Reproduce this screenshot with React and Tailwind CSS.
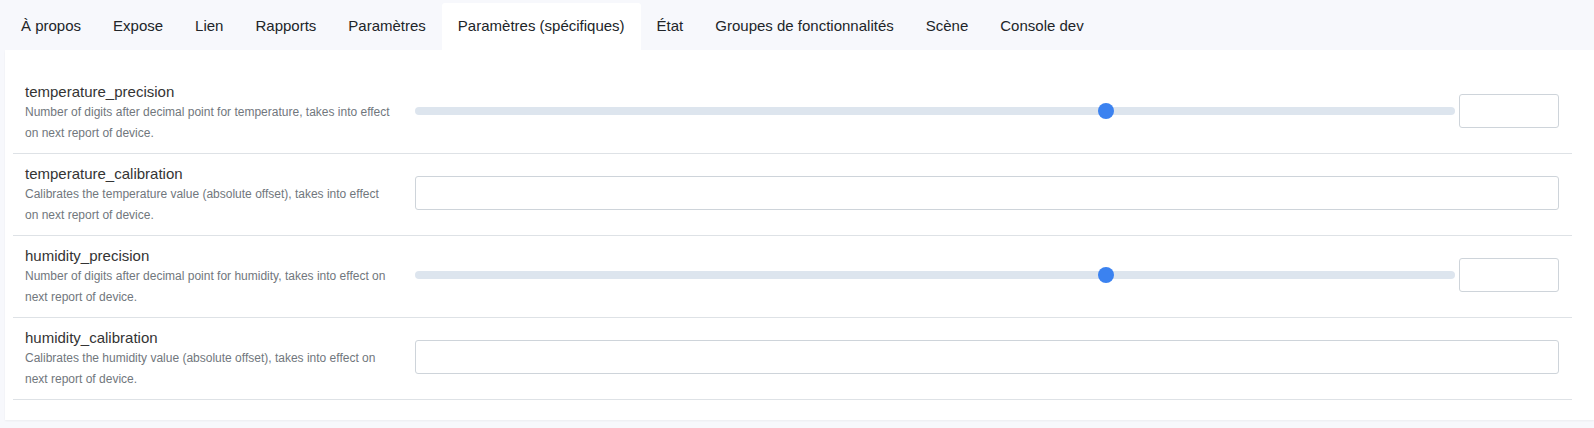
import React, { useState } from 'react';

const tabs = [
  'À propos',
  'Expose',
  'Lien',
  'Rapports',
  'Paramètres',
  'Paramètres (spécifiques)',
  'État',
  'Groupes de fonctionnalités',
  'Scène',
  'Console dev',
];

const settings = [
  {
    name: 'temperature_precision',
    description: 'Number of digits after decimal point for temperature, takes into effect on next report of device.',
    type: 'range',
    value: 2,
    max: 3,
  },
  {
    name: 'temperature_calibration',
    description: 'Calibrates the temperature value (absolute offset), takes into effect on next report of device.',
    type: 'number',
  },
  {
    name: 'humidity_precision',
    description: 'Number of digits after decimal point for humidity, takes into effect on next report of device.',
    type: 'range',
    value: 2,
    max: 3,
  },
  {
    name: 'humidity_calibration',
    description: 'Calibrates the humidity value (absolute offset), takes into effect on next report of device.',
    type: 'number',
  },
];

function RangeInput({ value, max }) {
  const ratio = value / max;
  return (
    <div className="flex flex-1 items-center gap-1">
      {/* Track */}
      <div className="relative h-2 flex-1 rounded-full bg-[#dde5ee]">
        <div
          className="absolute top-1/2 h-4 w-4 -translate-y-1/2 rounded-full bg-[#3b82f0]"
          style={{ left: `calc(${ratio} * (100% - 16px))` }}
        />
      </div>
      <input
        type="text"
        className="h-[34px] w-[100px] shrink-0 rounded-[3px] border border-[#ced4da] bg-white px-2 text-[15px] outline-none"
      />
    </div>
  );
}

function SettingRow({ setting }) {
  return (
    <div className="flex h-[82px] items-center border-b border-[#dee2e6] pr-[13px]">
      <div className="w-[380px] shrink-0 pl-3">
        <div className="text-[15px] leading-5 text-[#343434]">{setting.name}</div>
        <div className="text-[12px] leading-[21px] text-[#71777d]">{setting.description}</div>
      </div>
      <div className="mb-1 ml-[22px] flex flex-1 items-center">
        {setting.type === 'range' ? (
          <RangeInput value={setting.value} max={setting.max} />
        ) : (
          <input
            type="text"
            className="h-[34px] w-full rounded-[3px] border border-[#ced4da] bg-white px-2 text-[15px] outline-none"
          />
        )}
      </div>
    </div>
  );
}

export default function App() {
  const [active, setActive] = useState(5);

  return (
    <div className="min-h-screen bg-[#f7f8fc] pl-[5px] font-['Liberation_Sans',Arial,sans-serif]">
      {/* Tab bar */}
      <nav className="flex h-[50px] items-end pt-[3px]">
        {tabs.map((tab, i) => (
          <button
            key={tab}
            onClick={() => setActive(i)}
            className={`flex h-[47px] items-center px-4 text-[15px] text-[#212529] ${
              active === i ? 'rounded-t-[3px] bg-white' : ''
            }`}
          >
            {tab}
          </button>
        ))}
      </nav>

      {/* Settings card */}
      <div className="bg-white pb-5 pl-2 pr-[22px] pt-[22px] shadow-[0_1px_2px_rgba(0,0,0,0.05)]">
        {settings.map((s) => (
          <SettingRow key={s.name} setting={s} />
        ))}
      </div>
    </div>
  );
}
